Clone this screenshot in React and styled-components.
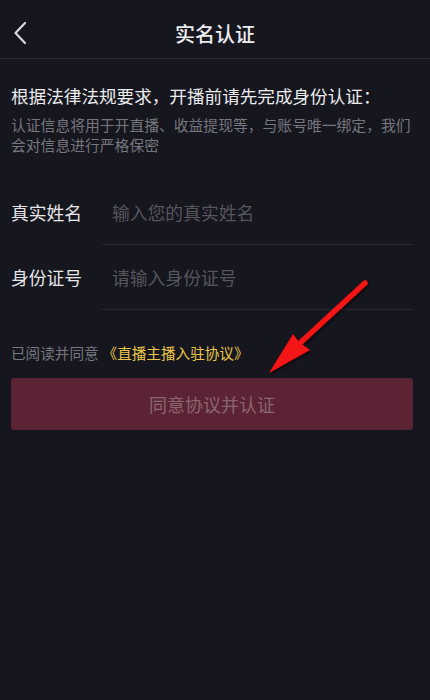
import React from 'react';
import styled, { createGlobalStyle } from 'styled-components';

const GlobalStyle = createGlobalStyle`
  body {
    margin: 0;
    background: #16161f;
    font-family: "Noto Sans CJK SC", "Noto Sans", sans-serif;
  }
`;

const Page = styled.div`
  position: relative;
  width: 430px;
  min-height: 700px;
  background: #16161f;
  color: #e6e6e8;
`;

const Header = styled.header`
  position: relative;
  height: 50px;
  padding-top: 8px;
  display: flex;
  align-items: center;
  justify-content: center;
  border-bottom: 1px solid #2b2b34;
`;

const Back = styled.button`
  position: absolute;
  left: 8px;
  top: 19px;
  width: 24px;
  height: 28px;
  padding: 0;
  border: 0;
  background: none;
  display: flex;
  align-items: center;
  justify-content: center;
`;

const Title = styled.h1`
  margin: 0;
  font-size: 20px;
  font-weight: 500;
  color: #ececee;
`;

const Intro = styled.section`
  padding: 25px 11px 0;
`;

const Heading = styled.h2`
  margin: 0;
  font-size: 17.6px;
  line-height: 24px;
  font-weight: 400;
  color: #ececee;
`;

const Note = styled.p`
  margin: 7px 0 0;
  font-size: 14.8px;
  line-height: 19.5px;
  color: #76767e;
`;

const Form = styled.div`
  margin-top: 26px;
  padding: 0 17px 0 11px;
`;

const Row = styled.label`
  display: flex;
  height: 65px;
`;

const Label = styled.span`
  width: 91px;
  flex-shrink: 0;
  display: flex;
  align-items: center;
  padding-bottom: 1px;
  font-size: 17.8px;
  color: #e6e6e8;
`;

const Field = styled.input`
  flex: 1;
  min-width: 0;
  border: 0;
  border-bottom: 1px solid #282830;
  background: transparent;
  padding: 0 0 1px 10px;
  font-family: inherit;
  font-size: 17.8px;
  color: #e6e6e8;
  outline: none;

  &::placeholder {
    color: #55555d;
  }
`;

const Agree = styled.p`
  margin: 33px 11px 0;
  font-size: 14.6px;
  line-height: 20px;
  color: #76767e;
`;

const Link = styled.span`
  margin-left: 4px;
  color: #e9c64a;
`;

const Submit = styled.button`
  display: block;
  margin: 15px 17px 0 11px;
  width: 402px;
  height: 52px;
  border: 0;
  border-radius: 3px;
  background: #5c2334;
  font-family: inherit;
  font-size: 18px;
  color: #8a6571;
`;

const Overlay = styled.svg`
  position: absolute;
  top: 0;
  left: 0;
  pointer-events: none;
`;

export default function App() {
  return (
    <Page>
      <GlobalStyle />
      <Header>
        <Back aria-label="返回">
          <svg width="14" height="24" viewBox="0 0 14 24">
            <path d="M12 2 L2.5 12 L12 22" fill="none" stroke="#d8d8dc" strokeWidth="2.2" strokeLinecap="round" strokeLinejoin="round" />
          </svg>
        </Back>
        <Title>实名认证</Title>
      </Header>

      <Intro>
        <Heading>根据法律法规要求，开播前请先完成身份认证：</Heading>
        <Note>认证信息将用于开直播、收益提现等，与账号唯一绑定，我们会对信息进行严格保密</Note>
      </Intro>

      <Form>
        <Row>
          <Label>真实姓名</Label>
          <Field placeholder="输入您的真实姓名" />
        </Row>
        <Row>
          <Label>身份证号</Label>
          <Field placeholder="请输入身份证号" />
        </Row>
      </Form>

      <Agree>
        已阅读并同意<Link>《直播主播入驻协议》</Link>
      </Agree>

      <Submit>同意协议并认证</Submit>

      <Overlay width="430" height="700" viewBox="0 0 430 700">
        <defs>
          <filter id="shadow" x="-20%" y="-20%" width="140%" height="140%">
            <feDropShadow dx="1" dy="1.5" stdDeviation="1.5" floodColor="#000" floodOpacity="0.7" />
          </filter>
        </defs>
        <g filter="url(#shadow)" fill="#f21212">
          <path d="M365 283 L300 343" stroke="#f21212" strokeWidth="5.5" strokeLinecap="round" />
          <path d="M269 373 L293 334 L299 342 L310 350 Z" />
        </g>
      </Overlay>
    </Page>
  );
}
